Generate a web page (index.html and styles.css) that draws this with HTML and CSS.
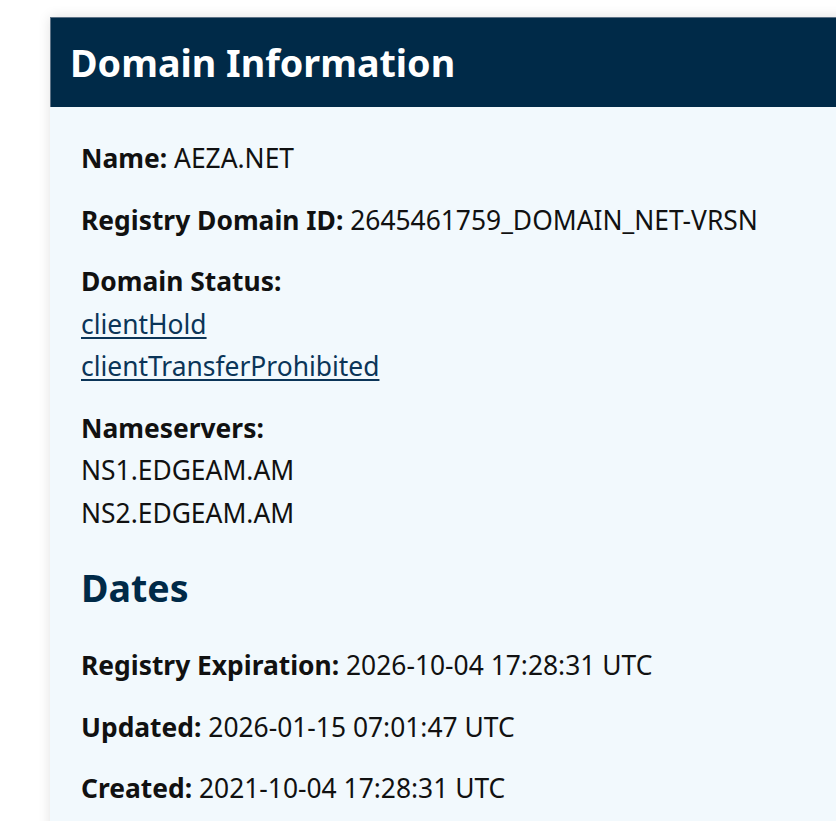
FILE: index.html
```html
<!DOCTYPE html>
<html lang="en">
<head>
<meta charset="utf-8">
<title>Domain Information</title>
<link rel="stylesheet" href="styles.css">
</head>
<body>
<div class="page">
  <section class="card">
    <header class="card-header">
      <h1 class="card-title">Domain Information</h1>
    </header>
    <div class="card-body">
      <p class="field"><strong>Name:</strong> AEZA.NET</p>
      <p class="field"><strong>Registry Domain ID:</strong> 2645461759_DOMAIN_NET-VRSN</p>
      <div class="field">
        <strong>Domain Status:</strong>
        <a class="status" href="#">clientHold</a>
        <a class="status" href="#">clientTransferProhibited</a>
      </div>
      <div class="field">
        <strong>Nameservers:</strong>
        <span class="ns">NS1.EDGEAM.AM</span>
        <span class="ns">NS2.EDGEAM.AM</span>
      </div>
      <h2 class="section-title">Dates</h2>
      <p class="field"><strong>Registry Expiration:</strong> 2026-10-04 17:28:31 UTC</p>
      <p class="field"><strong>Updated:</strong> 2026-01-15 07:01:47 UTC</p>
      <p class="field"><strong>Created:</strong> 2021-10-04 17:28:31 UTC</p>
    </div>
  </section>
</div>
</body>
</html>
```
FILE: styles.css
```css
html, body {
  margin: 0;
  padding: 0;
  background: #ffffff;
  overflow: hidden;
}
body {
  font-family: "Noto Sans", "Open Sans", sans-serif;
  color: #111111;
}
.page {
  padding: 17px 0 0 50px;
}
.card {
  width: 900px;
  background: #f2f9fd;
  box-shadow: 0 0 12px rgba(0, 0, 0, 0.12);
}
.card-header {
  background: #002a48;
  border-top: 1px solid #5d7286;
  border-left: 1px solid #5d7286;
  height: 89px;
  display: flex;
  align-items: center;
  padding: 0 19px;
}
.card-title {
  margin: 0;
  color: #ffffff;
  font-size: 37.7px;
  font-weight: 700;
  line-height: 1.2;
}
.card-body {
  padding: 30px 30px 10px 31px;
  font-size: 26.4px;
  line-height: 42.5px;
}
.field {
  margin: 0 0 19px;
}
.field strong {
  font-weight: 700;
}
div.field strong,
.status,
.ns {
  display: block;
}
.status {
  color: #0b3558;
  text-decoration: underline;
  text-underline-offset: 3px;
  text-decoration-thickness: 2px;
  width: max-content;
}
.section-title {
  margin: 32px 0 35px;
  color: #002a48;
  font-size: 37.6px;
  font-weight: 700;
  line-height: 43px;
}
```
